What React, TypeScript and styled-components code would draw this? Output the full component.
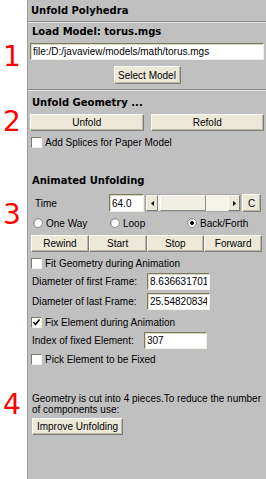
import React from 'react';
import styled, { createGlobalStyle } from 'styled-components';

const GlobalStyle = createGlobalStyle`
    body {
        margin: 0;
        background: #fff;
    }
`;

export default function App() {
    return (
        <>
            <GlobalStyle />
            <Page>
                <Gutter>
                    <Marker $mt={44}>1</Marker>
                    <Marker $mt={39}>2</Marker>
                    <Marker $mt={67}>3</Marker>
                    <Marker $mt={164}>4</Marker>
                </Gutter>
                <Panel>
                    <TitleBar>Unfold Polyhedra</TitleBar>
                    <Section>
                        <Heading $mt={3}>Load Model: torus.mgs</Heading>
                        <TextField
                            $mt={4}
                            readOnly
                            value="file:/D:/javaview/models/math/torus.mgs"
                        />
                        <Button $mt={6} $center $width={67} $height={18}>
                            Select Model
                        </Button>
                    </Section>
                    <Section $grow>
                        <Heading $mt={6}>Unfold Geometry ...</Heading>
                        <SplitRow $mt={4}>
                            <Button $height={17}>Unfold</Button>
                            <Button $height={17}>Refold</Button>
                        </SplitRow>
                        <Check $mt={5} label="Add Splices for Paper Model" />

                        <Heading $mt={26}>Animated Unfolding</Heading>
                        <TimeRow $mt={6}>
                            <TimeLabel>Time</TimeLabel>
                            <SmallField readOnly value="64.0" />
                            <Scrollbar>
                                <ArrowButton>
                                    <svg width="3" height="5" viewBox="0 0 3 5">
                                        <path d="M3 0 L0 2.5 L3 5 Z" fill="#000" />
                                    </svg>
                                </ArrowButton>
                                <Track>
                                    <Thumb />
                                </Track>
                                <ArrowButton>
                                    <svg width="3" height="5" viewBox="0 0 3 5">
                                        <path d="M0 0 L3 2.5 L0 5 Z" fill="#000" />
                                    </svg>
                                </ArrowButton>
                            </Scrollbar>
                            <Button $width={19} $height={18}>
                                C
                            </Button>
                        </TimeRow>
                        <RadioRow $mt={5}>
                            <RadioItem>
                                <RadioDot />
                                One Way
                            </RadioItem>
                            <RadioItem>
                                <RadioDot />
                                Loop
                            </RadioItem>
                            <RadioItem>
                                <RadioDot $checked />
                                Back/Forth
                            </RadioItem>
                        </RadioRow>
                        <ControlRow $mt={6}>
                            <Button $height={17}>Rewind</Button>
                            <Button $height={17}>Start</Button>
                            <Button $height={17}>Stop</Button>
                            <Button $height={17}>Forward</Button>
                        </ControlRow>
                        <Check $mt={5} label="Fit Geometry during Animation" />
                        <FieldRow $mt={4}>
                            <FieldLabel $width={115}>Diameter of first Frame:</FieldLabel>
                            <ValueField readOnly value="8.636631701547" />
                        </FieldRow>
                        <FieldRow $mt={3}>
                            <FieldLabel $width={115}>Diameter of last Frame:</FieldLabel>
                            <ValueField readOnly value="25.548208347" />
                        </FieldRow>
                        <Check $mt={6} checked label="Fix Element during Animation" />
                        <FieldRow $mt={4}>
                            <FieldLabel $width={112}>Index of fixed Element:</FieldLabel>
                            <ValueField readOnly value="307" />
                        </FieldRow>
                        <Check $mt={4} label="Pick Element to be Fixed" />

                        <Note $mt={28}>
                            Geometry is cut into 4 pieces.To reduce the number
                            <br />
                            of components use:
                        </Note>
                        <Button $mt={3} $width={91} $height={17} $indent>
                            Improve Unfolding
                        </Button>
                    </Section>
                </Panel>
            </Page>
        </>
    );
}

function Check({
    label,
    checked,
    $mt,
}: {
    label: string;
    checked?: boolean;
    $mt: number;
}) {
    return (
        <CheckRow $mt={$mt}>
            <CheckBox>
                {checked && (
                    <svg width="9" height="9" viewBox="0 0 9 9">
                        <path
                            d="M1.5 4 L3.5 6.5 L7.5 1.5"
                            fill="none"
                            stroke="#000"
                            strokeWidth="1.6"
                        />
                    </svg>
                )}
            </CheckBox>
            {label}
        </CheckRow>
    );
}

const Page = styled.div`
    display: flex;
    width: 266px;
    height: 479px;
    font-family: 'Liberation Sans', Arial, sans-serif;
    font-size: 10px;
    color: #000;
`;

const Gutter = styled.div`
    width: 27px;
    flex: none;
    display: flex;
    flex-direction: column;
`;

const Marker = styled.div<{ $mt: number }>`
    margin-top: ${p => p.$mt}px;
    width: 24px;
    height: 26px;
    line-height: 26px;
    text-align: center;
    font-family: 'DejaVu Sans', sans-serif;
    font-size: 28px;
    color: #ff0000;
`;

const Panel = styled.div`
    flex: 1;
    display: flex;
    flex-direction: column;
    background: #c0c0c0;
    border-left: 1px solid #9c9c9c;
    border-right: 1px solid #7c7c7c;
`;

const TitleBar = styled.div`
    height: 21px;
    padding-left: 3px;
    display: flex;
    align-items: center;
    font: bold 10px 'DejaVu Sans', sans-serif;
`;

const Section = styled.section<{ $grow?: boolean }>`
    display: flex;
    flex-direction: column;
    padding: 0 2px 5px;
    border-top: 1px solid #8c8c8c;
    box-shadow: inset 0 1px 0 #e4e4e4;
    ${p => p.$grow && 'flex: 1;'}
`;

const Heading = styled.div<{ $mt: number }>`
    margin-top: ${p => p.$mt}px;
    padding-left: 2px;
    line-height: 14px;
    font: bold 10px/14px 'DejaVu Sans', sans-serif;
`;

const fieldBase = `
    box-sizing: border-box;
    height: 17px;
    margin: 0;
    padding: 0 2px;
    background: #fff;
    border: 1px solid;
    border-color: #7d7a62 #f3f1e6 #f3f1e6 #7d7a62;
    box-shadow: inset 1px 1px 0 #d8d5c4;
    font-family: 'Liberation Sans', Arial, sans-serif;
    font-size: 10px;
    color: #000;
    outline: none;
`;

const TextField = styled.input<{ $mt: number }>`
    ${fieldBase}
    margin-top: ${p => p.$mt}px;
    width: 100%;
`;

const SmallField = styled.input`
    ${fieldBase}
    height: 18px;
    width: 35px;
    flex: none;
`;

const ValueField = styled.input`
    ${fieldBase}
    width: 63px;
    flex: none;
`;

const Button = styled.button<{
    $mt?: number;
    $width?: number;
    $height: number;
    $center?: boolean;
    $indent?: boolean;
}>`
    box-sizing: border-box;
    margin: ${p => p.$mt ?? 0}px 0 0;
    ${p => p.$center && 'align-self: center;'}
    ${p => p.$indent && 'margin-left: 2px; align-self: flex-start;'}
    ${p => (p.$width ? `width: ${p.$width}px; flex: none;` : 'flex: 1;')}
    height: ${p => p.$height}px;
    padding: 0;
    background: #ece9d9;
    border: 1px solid;
    border-color: #fbfaf4 #7e7e7e #7e7e7e #fbfaf4;
    box-shadow: inset -1px -1px 0 #bdb9a8;
    font-family: 'Liberation Sans', Arial, sans-serif;
    font-size: 10px;
    color: #000;
`;

const SplitRow = styled.div<{ $mt: number }>`
    margin-top: ${p => p.$mt}px;
    display: flex;
    gap: 7px;
`;

const CheckRow = styled.div<{ $mt: number }>`
    margin-top: ${p => p.$mt}px;
    margin-left: 1px;
    height: 12px;
    display: flex;
    align-items: center;
    gap: 3px;
`;

const CheckBox = styled.span`
    box-sizing: border-box;
    width: 11px;
    height: 11px;
    flex: none;
    display: flex;
    align-items: center;
    justify-content: center;
    background: #fff;
    border: 1px solid;
    border-color: #7d7a62 #f3f1e6 #f3f1e6 #7d7a62;
`;

const TimeRow = styled.div<{ $mt: number }>`
    margin-top: ${p => p.$mt}px;
    height: 18px;
    display: flex;
    gap: 1px;
`;

const TimeLabel = styled.span`
    width: 73px;
    margin-left: 5px;
    display: flex;
    align-items: center;
`;

const Scrollbar = styled.div`
    width: 96px;
    flex: none;
    display: flex;
    background: #f5f3ea;
    box-sizing: border-box;
    border: 1px solid #a8a8a8;
`;

const ArrowButton = styled.span`
    box-sizing: border-box;
    width: 12px;
    flex: none;
    display: flex;
    align-items: center;
    justify-content: center;
    background: #ece9d9;
    border: 1px solid;
    border-color: #fbfaf4 #7e7e7e #7e7e7e #fbfaf4;
`;

const Track = styled.span`
    flex: 1;
    display: flex;
    padding-left: 2px;
`;

const Thumb = styled.span`
    box-sizing: border-box;
    width: 46px;
    background: #f1efe5;
    border: 1px solid;
    border-color: #fff #8a8a8a #8a8a8a #fff;
`;

const RadioRow = styled.div<{ $mt: number }>`
    margin-top: ${p => p.$mt}px;
    padding-left: 3px;
    height: 12px;
    display: grid;
    grid-template-columns: repeat(3, 77px);
`;

const RadioItem = styled.label`
    display: flex;
    align-items: center;
    gap: 3px;
`;

const RadioDot = styled.span<{ $checked?: boolean }>`
    box-sizing: border-box;
    width: 10px;
    height: 10px;
    flex: none;
    border-radius: 50%;
    background: ${p =>
        p.$checked
            ? 'radial-gradient(circle, #000 0 1.6px, #fff 2.2px)'
            : '#fff'};
    border: 1px solid #8a8a8a;
    box-shadow: inset 1px 1px 0 #d0d0d0;
`;

const ControlRow = styled.div<{ $mt: number }>`
    margin: ${p => p.$mt}px 2px 0 1px;
    display: flex;
`;

const FieldRow = styled.div<{ $mt: number }>`
    margin-top: ${p => p.$mt}px;
    height: 17px;
    display: flex;
    align-items: center;
`;

const FieldLabel = styled.span<{ $width: number }>`
    width: ${p => p.$width}px;
    margin-left: 2px;
`;

const Note = styled.p<{ $mt: number }>`
    margin: ${p => p.$mt}px 0 0 2px;
    line-height: 11px;
`;
